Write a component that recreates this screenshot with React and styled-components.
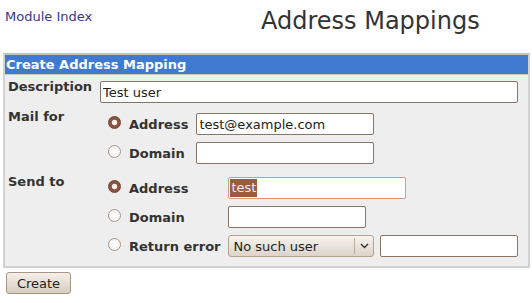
import React from "react";
import styled, { createGlobalStyle } from "styled-components";

const Global = createGlobalStyle`
  html, body { margin: 0; padding: 0; background: #fff; }
  body { font-family: "DejaVu Sans", "Liberation Sans", sans-serif; font-size: 13px; color: #333; }
  * { box-sizing: border-box; }
`;

const Page = styled.div`
  padding: 0 2px 0 3px;
`;

const Header = styled.div`
  display: grid;
  grid-template-columns: 258px 1fr;
  align-items: start;
  padding-top: 7px;
  height: 53px;
`;

const IndexLink = styled.a`
  margin: 1.5px 0 0 2px;
  font-size: 13px;
  line-height: 15px;
  color: #3b3493;
  text-decoration: none;
`;

const Title = styled.h1`
  margin: 0;
  font-size: 24px;
  line-height: 28px;
  font-weight: normal;
  color: #333;
`;

const FormBox = styled.div`
  border: 2px solid #d2d2d2;
  border-top-color: #c2c2c2;
`;

const BoxHead = styled.div`
  background: #407ad0;
  color: #fff;
  font-weight: bold;
  font-size: 13px;
  line-height: 20px;
  height: 20px;
  padding-left: 1px;
  border-bottom: 1px solid #c8c8c8;
`;

const BoxBody = styled.div`
  background: #eeeeee;
  padding-bottom: 9px;
`;

const Row = styled.div`
  display: grid;
  grid-template-columns: 95px 1fr;
  align-items: start;
  padding-top: ${(p) => p.$top}px;
`;

const Label = styled.div`
  font-weight: bold;
  line-height: 15px;
  padding-left: 3px;
  color: #333;
`;

const Cell = styled.div`
  margin-top: ${(p) => p.$offset}px;
`;

const TextInput = styled.input`
  display: block;
  width: ${(p) => p.$w}px;
  height: 22px;
  margin: 0;
  padding: 1px 2px;
  border: 1px solid #877665;
  border-radius: 2px;
  background: #fff;
  font-family: inherit;
  font-size: 13px;
  color: #222;
  outline: none;
`;

const FocusedField = styled.div`
  width: ${(p) => p.$w}px;
  height: 22px;
  padding: 1px 1px;
  border: 1px solid #d39a7c;
  border-radius: 2px;
  background: #fff;
  display: flex;
  align-items: center;
  line-height: 18px;
`;

const Selected = styled.span`
  background: #9a5b3f;
  color: #e6ecfb;
  padding: 0 1px;
`;

const Options = styled.div`
  display: grid;
  grid-template-columns: 13px auto 1fr;
  column-gap: 8px;
  row-gap: 7px;
  align-items: center;
  margin-left: 8px;
`;

const Radio = styled.input.attrs({ type: "radio" })`
  appearance: none;
  -webkit-appearance: none;
  width: 13px;
  height: 13px;
  margin: 0 0 3px 0;
  border-radius: 50%;
  border: 1px solid #a69483;
  background: radial-gradient(circle at 50% 40%, #ffffff 0, #f3eeea 100%);
  &:checked {
    border-color: #6e412e;
    background: radial-gradient(circle at center, #fbf5f1 0 2.2px, #8a563f 3.2px 100%);
  }
`;

const OptLabel = styled.span`
  font-weight: bold;
  line-height: 15px;
  color: #333;
`;

const Inline = styled.div`
  display: flex;
  align-items: center;
  gap: 6px;
`;

const SelectWrap = styled.div`
  position: relative;
  width: 146px;
  height: 22px;
`;

const Select = styled.select`
  appearance: none;
  -webkit-appearance: none;
  width: 100%;
  height: 22px;
  margin: 0;
  padding: 0 22px 0 4px;
  border: 1px solid #b3a392;
  border-radius: 3px;
  background: linear-gradient(#f7f3ef, #ddd3c9);
  font-family: inherit;
  font-size: 13px;
  color: #222;
  outline: none;
`;

const Arrow = styled.span`
  position: absolute;
  right: 1px;
  top: 3px;
  bottom: 3px;
  width: 19px;
  border-left: 1px solid #b9ab9d;
  display: flex;
  align-items: center;
  justify-content: center;
  pointer-events: none;
`;

const Button = styled.button`
  margin: 4px 0 0 3px;
  width: 65px;
  height: 22px;
  padding: 0;
  border: 1px solid #a69686;
  border-radius: 3px;
  background: linear-gradient(#f5f0ea, #d8cdc1);
  font-family: inherit;
  font-size: 13px;
  color: #222;
`;

export default function App() {
  return (
    <Page>
      <Global />
      <Header>
        <IndexLink href="#">Module Index</IndexLink>
        <Title>Address Mappings</Title>
      </Header>
      <FormBox>
        <BoxHead>Create Address Mapping</BoxHead>
        <BoxBody>
          <Row $top={4}>
            <Label>Description</Label>
            <Cell $offset={2}>
              <TextInput $w={418} defaultValue="Test user" />
            </Cell>
          </Row>
          <Row $top={6}>
            <Label>Mail for</Label>
            <Cell $offset={4}>
              <Options>
                <Radio name="from" defaultChecked />
                <OptLabel>Address</OptLabel>
                <TextInput $w={178} defaultValue="test@example.com" />
                <Radio name="from" />
                <OptLabel>Domain</OptLabel>
                <TextInput $w={178} defaultValue="" />
              </Options>
            </Cell>
          </Row>
          <Row $top={10}>
            <Label>Send to</Label>
            <Cell $offset={3}>
              <Options>
                <Radio name="to" defaultChecked />
                <OptLabel>Address</OptLabel>
                <FocusedField $w={178}>
                  <Selected>test</Selected>
                </FocusedField>
                <Radio name="to" />
                <OptLabel>Domain</OptLabel>
                <TextInput $w={138} defaultValue="" />
                <Radio name="to" />
                <OptLabel>Return error</OptLabel>
                <Inline>
                  <SelectWrap>
                    <Select defaultValue="nouser">
                      <option value="nouser">No such user</option>
                    </Select>
                    <Arrow>
                      <svg width="9" height="6" viewBox="0 0 9 6">
                        <path d="M1 1 L4.5 4.5 L8 1" fill="none" stroke="#333" strokeWidth="1.4" />
                      </svg>
                    </Arrow>
                  </SelectWrap>
                  <TextInput $w={138} defaultValue="" />
                </Inline>
              </Options>
            </Cell>
          </Row>
        </BoxBody>
      </FormBox>
      <Button>Create</Button>
    </Page>
  );
}
